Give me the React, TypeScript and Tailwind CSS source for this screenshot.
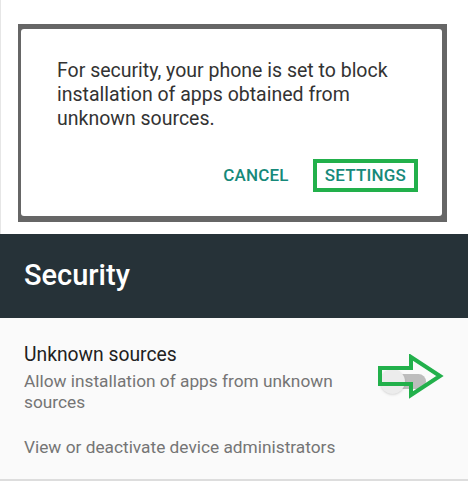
export default function App() {
  return (
    <div className="w-[468px] h-[497px] bg-white flex flex-col overflow-hidden" style={{ fontFamily: "Roboto, 'Liberation Sans', sans-serif" }}>
      <div className="pt-[24px] pl-[17px] pr-[21px] h-[234px] border-l border-[#e6e6e6]">
        <div className="bg-[#666666] pt-[5px] pb-[6px] pl-[3px] pr-[5px] h-[198px]">
          <div className="bg-white rounded-[3px] h-full flex flex-col">
            <p className="pl-[36px] pr-[40px] pt-[30px] text-[19.5px] leading-[24px] text-[#333333]">
              For security, your phone is set to block installation of apps obtained from unknown sources.
            </p>
            <div className="flex justify-end items-center mt-[28px] pr-[24px]">
              <span className="text-[17px] font-medium text-[#16897a] tracking-[0.2px] mr-[24px]">CANCEL</span>
              <span className="border-[4px] border-[#22b04b] h-[33px] px-[8px] flex items-center text-[17px] font-medium text-[#16897a] tracking-[0.2px]">SETTINGS</span>
            </div>
          </div>
        </div>
      </div>
      <div className="bg-[#263238] h-[84px] flex items-center pl-[24px]">
        <span className="text-white text-[29px] font-medium">Security</span>
      </div>
      <div className="bg-[#fafafa] h-[163px] border-b-[2px] border-[#dddddd] pl-[24px] pt-[25px] relative">
        <div className="text-[19.3px] leading-[24px] text-[#212121]">Unknown sources</div>
        <div className="text-[17.3px] leading-[21px] text-[#757575] mt-[4px] w-[330px]">Allow installation of apps from unknown sources</div>
        <div className="text-[17.3px] leading-[21px] text-[#757575] mt-[24px]">View or deactivate device administrators</div>
        <div className="absolute left-[380px] top-[48px] w-[50px] h-[30px]">
          <div className="absolute left-[6px] top-[8px] w-[40px] h-[15px] rounded-full bg-[#bdbdbd]"></div>
          <div className="absolute left-0 top-[3px] w-[25px] h-[25px] rounded-full bg-[#ececec] shadow"></div>
        </div>
        <svg className="absolute left-[377px] top-[36px]" width="68" height="48" viewBox="0 0 68 48">
          <path d="M3 14 H34 V3 L63 22 L34 41 V30 H3 Z" fill="none" stroke="#22b04b" strokeWidth="4" strokeLinejoin="miter" />
        </svg>
      </div>
    </div>
  );
}
